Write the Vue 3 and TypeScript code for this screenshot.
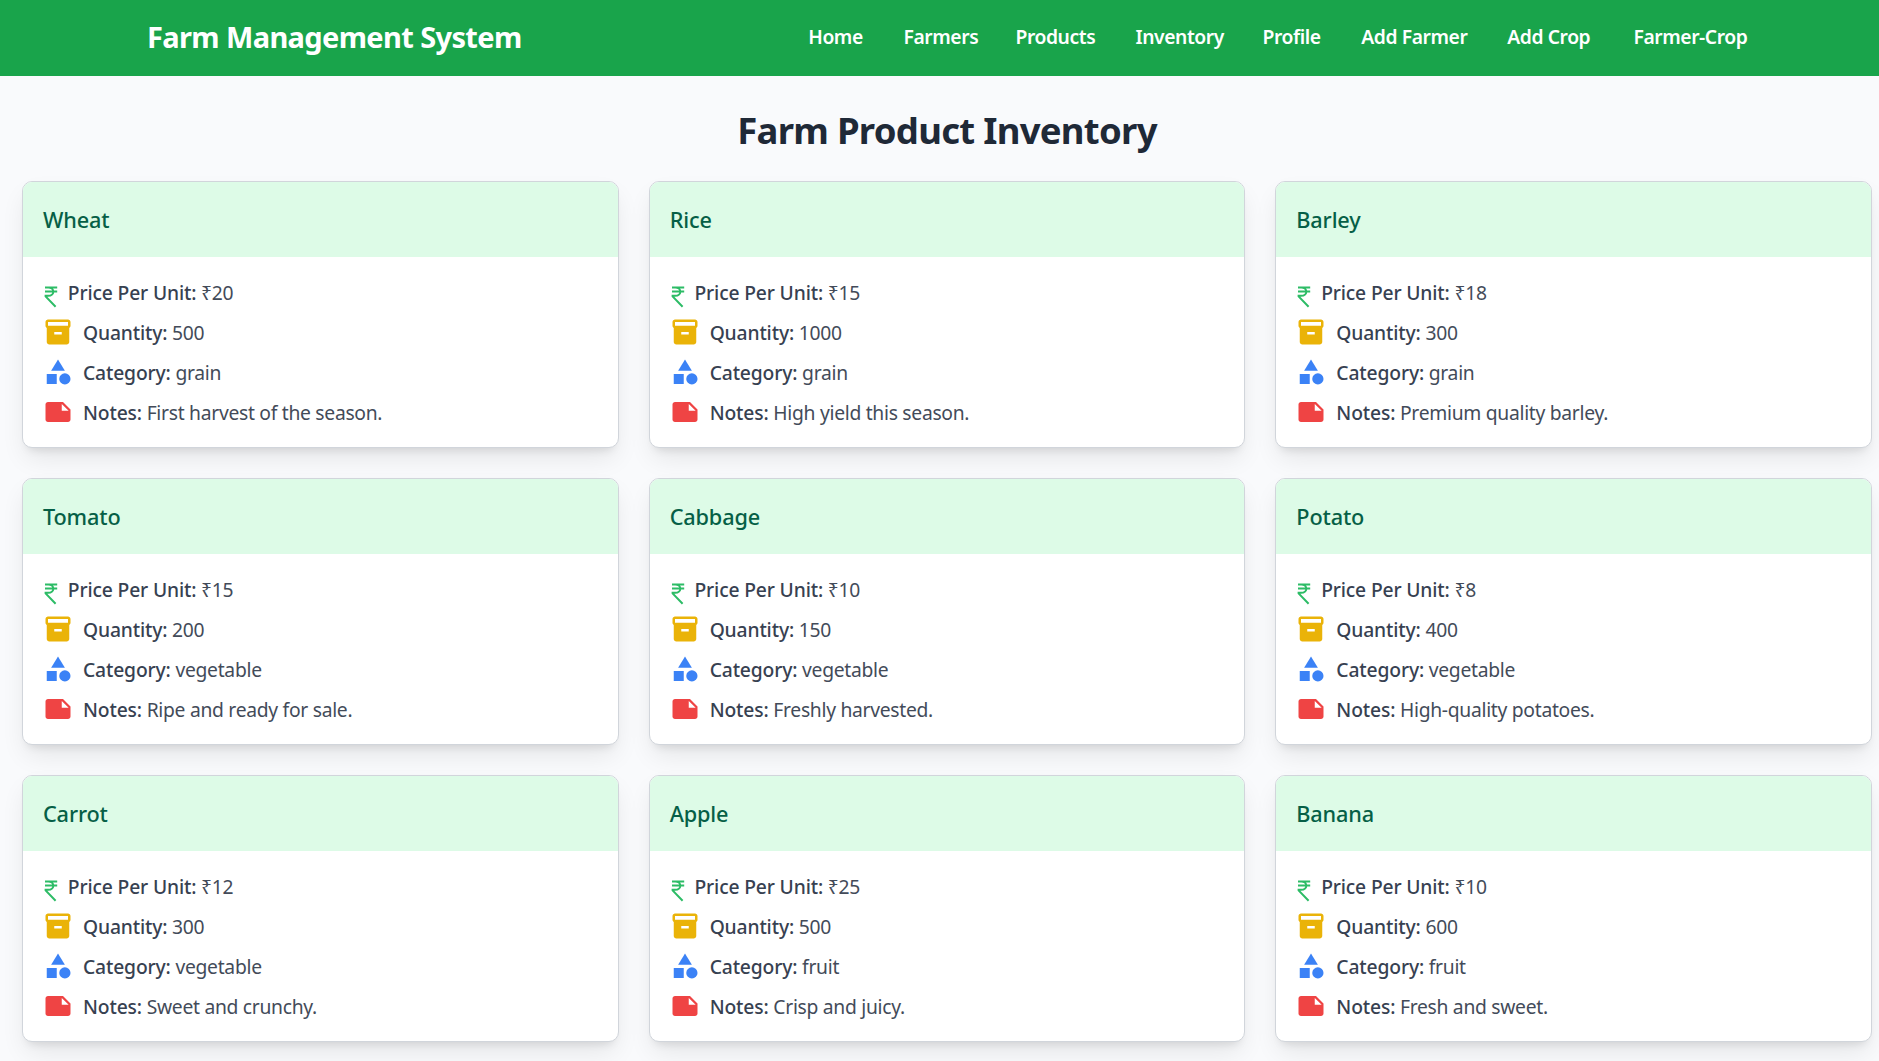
<script setup lang="ts">
interface NavLink {
  label: string
  width: number
}

interface Product {
  name: string
  price: number
  quantity: number
  category: string
  notes: string
}

const links: NavLink[] = [
  { label: 'Home', width: 55.3 },
  { label: 'Farmers', width: 72 },
  { label: 'Products', width: 80 },
  { label: 'Inventory', width: 87 },
  { label: 'Profile', width: 58.8 },
  { label: 'Add Farmer', width: 106 },
  { label: 'Add Crop', width: 86.2 },
  { label: 'Farmer-Crop', width: 115.2 },
]

const products: Product[] = [
  { name: 'Wheat', price: 20, quantity: 500, category: 'grain', notes: 'First harvest of the season.' },
  { name: 'Rice', price: 15, quantity: 1000, category: 'grain', notes: 'High yield this season.' },
  { name: 'Barley', price: 18, quantity: 300, category: 'grain', notes: 'Premium quality barley.' },
  { name: 'Tomato', price: 15, quantity: 200, category: 'vegetable', notes: 'Ripe and ready for sale.' },
  { name: 'Cabbage', price: 10, quantity: 150, category: 'vegetable', notes: 'Freshly harvested.' },
  { name: 'Potato', price: 8, quantity: 400, category: 'vegetable', notes: 'High-quality potatoes.' },
  { name: 'Carrot', price: 12, quantity: 300, category: 'vegetable', notes: 'Sweet and crunchy.' },
  { name: 'Apple', price: 25, quantity: 500, category: 'fruit', notes: 'Crisp and juicy.' },
  { name: 'Banana', price: 10, quantity: 600, category: 'fruit', notes: 'Fresh and sweet.' },
]
</script>

<template>
  <div class="page">
    <header class="topbar">
      <div class="brand">Farm Management System</div>
      <nav class="nav">
        <a v-for="link in links" :key="link.label" class="nav-link" :style="{ width: link.width + 'px' }">{{ link.label }}</a>
      </nav>
    </header>

    <main class="content">
      <h1 class="heading">Farm Product Inventory</h1>
      <div class="grid">
        <article v-for="product in products" :key="product.name" class="card">
          <h2 class="card-title">{{ product.name }}</h2>
          <div class="card-body">
            <div class="row">
              <svg class="icon-rupee" viewBox="0 0 14 30" aria-hidden="true">
                <path d="M2 10.5H14.2M2 14.5H14.2M2 10.5H5.2C12 10.5 12 18.8 5.2 18.8H2.6V19.4L12.6 29.8" />
              </svg>
              <p class="text"><strong>Price Per Unit:</strong> <span>₹{{ product.price }}</span></p>
            </div>
            <div class="row">
              <svg class="icon yellow" viewBox="0 0 24 24" aria-hidden="true">
                <path d="M20 2H4c-1 0-2 .9-2 2v3.01c0 .72.43 1.34 1 1.69V20c0 1.1 1.1 2 2 2h14c.9 0 2-.9 2-2V8.7c.57-.35 1-.97 1-1.69V4c0-1.1-1-2-2-2zm-5 12H9v-2h6v2zm5-7H4V4h16v3z" />
              </svg>
              <p class="text"><strong>Quantity:</strong> <span>{{ product.quantity }}</span></p>
            </div>
            <div class="row">
              <svg class="icon blue" viewBox="0 0 24 24" aria-hidden="true">
                <path d="M12 2l-5.5 9h11z" />
                <circle cx="17.5" cy="17.5" r="4.5" />
                <path d="M3 13.5h8v8H3z" />
              </svg>
              <p class="text"><strong>Category:</strong> <span>{{ product.category }}</span></p>
            </div>
            <div class="row">
              <svg class="icon red" viewBox="0 0 24 24" aria-hidden="true">
                <path d="M22 10l-6-6H4c-1.1 0-2 .9-2 2v12.01c0 1.1.9 1.99 2 1.99l16-.01c1.1 0 2-.89 2-1.99v-8zm-7-4.5l5.5 5.5H15V5.5z" />
              </svg>
              <p class="text"><strong>Notes:</strong> <span>{{ product.notes }}</span></p>
            </div>
          </div>
        </article>
      </div>
    </main>
  </div>
</template>

<style>
body {
  margin: 0;
  background: #f9fafc;
  overflow: hidden;
}
</style>

<style scoped>
.page {
  height: 1061px;
  overflow: hidden;
  background: #f9fafc;
  font-family: 'Noto Sans', 'Open Sans', sans-serif;
}

.topbar {
  box-sizing: border-box;
  height: 76px;
  padding: 0 130.3px 2px 147px;
  display: flex;
  align-items: center;
  justify-content: space-between;
  background: #19a44b;
  color: #fff;
}

.brand {
  font-size: 29px;
  font-weight: 700;
  letter-spacing: -0.63px;
  line-height: 40px;
}

.nav {
  display: flex;
  gap: 40px;
}

.nav-link {
  font-size: 19.3px;
  font-weight: 600;
  letter-spacing: -0.43px;
  line-height: 30px;
  white-space: nowrap;
}

.content {
  padding: 31px 7px 0 22px;
}

.heading {
  margin: 0 0 28px;
  text-align: center;
  font-size: 36.5px;
  font-weight: 700;
  line-height: 46px;
  letter-spacing: -0.72px;
  color: #1f2937;
}

.grid {
  display: grid;
  grid-template-columns: repeat(3, 1fr);
  gap: 30px;
}

.card {
  box-sizing: border-box;
  height: 267px;
  border: 1px solid #d1d5db;
  border-radius: 10px;
  overflow: hidden;
  background: #fff;
  box-shadow:
    0 12.5px 26px -4px rgba(0, 0, 0, 0.09),
    0 7px 10px -6px rgba(0, 0, 0, 0.12);
}

.card-title {
  box-sizing: border-box;
  height: 75px;
  margin: 0;
  padding: 20px;
  background: #ddfbe7;
  color: #065f46;
  font-size: 21.7px;
  font-weight: 550;
  line-height: 35px;
  letter-spacing: -0.15px;
}

.card-body {
  padding: 20px;
  display: flex;
  flex-direction: column;
  gap: 10px;
}

.row {
  display: flex;
  align-items: center;
  height: 30px;
}

.icon {
  width: 30px;
  height: 30px;
  margin-right: 10px;
  flex: none;
  fill: currentColor;
}

.icon-rupee {
  width: 14px;
  height: 30px;
  margin-right: 10.8px;
  flex: none;
  overflow: visible;
  fill: none;
  stroke: #2dbc66;
  stroke-width: 2;
}

.yellow { color: #eab308; }
.blue { color: #3b82f6; }
.red { color: #ef4444; }

.text {
  margin: 0;
  padding-top: 1px;
  font-size: 19.3px;
  font-weight: 400;
  line-height: 30px;
  letter-spacing: -0.29px;
  white-space: nowrap;
  color: #434b59;
}

.text strong {
  font-weight: 550;
  letter-spacing: -0.15px;
  color: #374151;
}
</style>
